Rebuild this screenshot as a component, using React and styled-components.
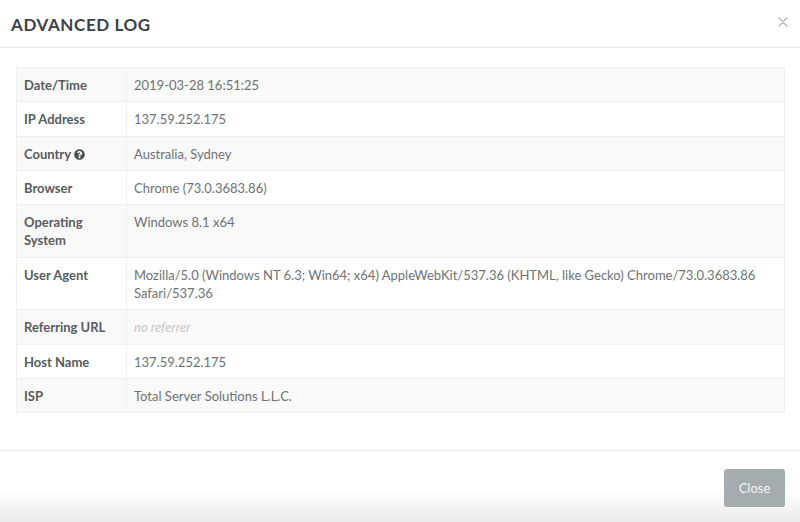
import React from "react";
import styled, { createGlobalStyle } from "styled-components";
import { FaQuestionCircle } from "react-icons/fa";

const GlobalStyle = createGlobalStyle`
  html, body {
    margin: 0;
    padding: 0;
    background: #fff;
  }
  body {
    font-family: Lato, "Open Sans", sans-serif;
    -webkit-font-smoothing: antialiased;
  }
`;

const Modal = styled.div`
  width: 800px;
  height: 522px;
  display: flex;
  flex-direction: column;
  background: #fff;
`;

const Header = styled.div`
  height: 48px;
  display: flex;
  align-items: center;
  justify-content: space-between;
  padding: 0 12px 0 11px;
  border-bottom: 1px solid #ececec;
  box-sizing: border-box;
`;

const Title = styled.h4`
  margin: 0;
  padding-top: 2px;
  font-size: 17px;
  font-weight: 700;
  letter-spacing: 0.6px;
  color: #3c4148;
`;

const CloseX = styled.button`
  border: 0;
  background: none;
  padding: 0;
  margin-top: -4px;
  display: flex;
  cursor: pointer;
`;

const Body = styled.div`
  flex: 1;
  padding: 19px 15px 0 16px;
`;

const Table = styled.table`
  width: 769px;
  border-collapse: collapse;
  border: 1px solid #efefef;
  font-size: 13px;
  line-height: 18.3px;
`;

const Row = styled.tr`
  background: ${(p) => (p.$striped ? "#f9f9f9" : "#fff")};
  border-top: 1px solid #efefef;
`;

const Label = styled.th`
  width: 94px;
  padding: 8px 8px 7px 7px;
  text-align: left;
  vertical-align: top;
  font-weight: 700;
  color: #565c62;
  border-right: 1px solid #efefef;
  white-space: nowrap;
`;

const Value = styled.td`
  padding: 8px 8px 7px 7px;
  vertical-align: top;
  color: #6e7277;
  font-style: ${(p) => (p.$muted ? "italic" : "normal")};
  ${(p) => p.$muted && "color: #c4c6c9;"}
`;

const HelpIcon = styled(FaQuestionCircle)`
  margin-left: 3px;
  vertical-align: -1px;
  color: #4a5057;
`;

const Footer = styled.div`
  height: 72px;
  border-top: 1px solid #ececec;
  display: flex;
  justify-content: flex-end;
  align-items: flex-start;
  padding: 18px 15px 0 0;
  box-sizing: border-box;
  background: linear-gradient(to bottom, #fff 55%, #ebebeb 100%);
`;

const CloseButton = styled.button`
  width: 61px;
  height: 38px;
  border: 0;
  border-radius: 3px;
  background: #a4acaf;
  color: #f3f5f6;
  font-family: Lato, sans-serif;
  font-size: 13px;
  cursor: pointer;
`;

const rows = [
  { label: "Date/Time", value: "2019-03-28 16:51:25" },
  { label: "IP Address", value: "137.59.252.175" },
  { label: "Country", value: "Australia, Sydney", help: true },
  { label: "Browser", value: "Chrome (73.0.3683.86)" },
  { label: ["Operating", "System"], value: "Windows 8.1 x64" },
  {
    label: "User Agent",
    value:
      "Mozilla/5.0 (Windows NT 6.3; Win64; x64) AppleWebKit/537.36 (KHTML, like Gecko) Chrome/73.0.3683.86 Safari/537.36",
  },
  { label: "Referring URL", value: "no referrer", muted: true },
  { label: "Host Name", value: "137.59.252.175" },
  { label: "ISP", value: "Total Server Solutions L.L.C." },
];

const App = () => {
  return (
    <>
      <GlobalStyle />
      <Modal>
        <Header>
          <Title>ADVANCED LOG</Title>
          <CloseX aria-label="close">
            <svg width="10" height="10" viewBox="0 0 10 10">
              <path
                d="M1 1 L9 9 M9 1 L1 9"
                stroke="#b9bcbf"
                strokeWidth="1.6"
                strokeLinecap="round"
              />
            </svg>
          </CloseX>
        </Header>
        <Body>
          <Table>
            <tbody>
              {rows.map((r, index) => (
                <Row key={index} $striped={index % 2 === 0}>
                  <Label>
                    {Array.isArray(r.label) ? (
                      <>
                        {r.label[0]}
                        <br />
                        {r.label[1]}
                      </>
                    ) : (
                      r.label
                    )}
                    {r.help && <HelpIcon size={11} />}
                  </Label>
                  <Value $muted={r.muted}>{r.value}</Value>
                </Row>
              ))}
            </tbody>
          </Table>
        </Body>
        <Footer>
          <CloseButton>Close</CloseButton>
        </Footer>
      </Modal>
    </>
  );
};

export default App;
